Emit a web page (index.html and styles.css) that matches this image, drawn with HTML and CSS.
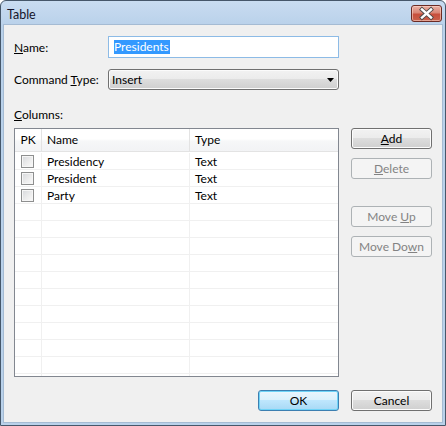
FILE: index.html
```html
<!DOCTYPE html>
<html>
<head>
<meta charset="utf-8">
<title>Table</title>
<link rel="stylesheet" href="styles.css">
</head>
<body>
<div class="window">
  <div class="titlebar">
    <span class="title">Table</span>
    <div class="close">
      <svg width="31" height="17" viewBox="0 0 31 17">
        <path d="M11 4.5 L20 12.5 M20 4.5 L11 12.5" stroke="#4a4a4a" stroke-width="4.2" stroke-linecap="square" fill="none"/>
        <path d="M11 4.5 L20 12.5 M20 4.5 L11 12.5" stroke="#ffffff" stroke-width="2.4" stroke-linecap="square" fill="none"/>
      </svg>
    </div>
  </div>
  <div class="client">
    <div class="field">
      <label class="label"><u>N</u>ame:</label>
      <div class="textbox"><span class="sel">Presidents</span></div>
    </div>
    <div class="field field-combo">
      <label class="label">Command <u>T</u>ype:</label>
      <div class="combo">
        <span class="combo-text">Insert</span>
        <svg class="combo-arrow" width="7" height="4" viewBox="0 0 7 4"><polygon points="0,0 7,0 3.5,4" fill="#000"/></svg>
      </div>
    </div>
    <div class="section-label"><u>C</u>olumns:</div>
    <div class="main">
      <div class="grid">
        <div class="row head">
          <div class="cell pk">PK</div>
          <div class="cell name">Name</div>
          <div class="cell type">Type</div>
        </div>
        <div class="rows">
          <div class="row">
            <div class="cell pk"><span class="check"></span></div>
            <div class="cell name">Presidency</div>
            <div class="cell type">Text</div>
          </div>
          <div class="row">
            <div class="cell pk"><span class="check"></span></div>
            <div class="cell name">President</div>
            <div class="cell type">Text</div>
          </div>
          <div class="row">
            <div class="cell pk"><span class="check"></span></div>
            <div class="cell name">Party</div>
            <div class="cell type">Text</div>
          </div>
          <div class="row"><div class="cell pk"></div><div class="cell name"></div><div class="cell type"></div></div>
          <div class="row"><div class="cell pk"></div><div class="cell name"></div><div class="cell type"></div></div>
          <div class="row"><div class="cell pk"></div><div class="cell name"></div><div class="cell type"></div></div>
          <div class="row"><div class="cell pk"></div><div class="cell name"></div><div class="cell type"></div></div>
          <div class="row"><div class="cell pk"></div><div class="cell name"></div><div class="cell type"></div></div>
          <div class="row"><div class="cell pk"></div><div class="cell name"></div><div class="cell type"></div></div>
          <div class="row"><div class="cell pk"></div><div class="cell name"></div><div class="cell type"></div></div>
          <div class="row"><div class="cell pk"></div><div class="cell name"></div><div class="cell type"></div></div>
          <div class="row"><div class="cell pk"></div><div class="cell name"></div><div class="cell type"></div></div>
          <div class="row"><div class="cell pk"></div><div class="cell name"></div><div class="cell type"></div></div>
          <div class="row"><div class="cell pk"></div><div class="cell name"></div><div class="cell type"></div></div>
        </div>
      </div>
      <div class="side">
        <div class="btn btn-add"><span><u>A</u>dd</span></div>
        <div class="btn disabled btn-delete"><span><u>D</u>elete</span></div>
        <div class="btn disabled btn-up"><span>Move <u>U</u>p</span></div>
        <div class="btn disabled btn-down"><span>Move Do<u>w</u>n</span></div>
      </div>
    </div>
    <div class="footer">
      <div class="btn default"><span>OK</span></div>
      <div class="btn"><span>Cancel</span></div>
    </div>
  </div>
</div>
</body>
</html>
```
FILE: styles.css
```css
html, body {
  margin: 0;
  padding: 0;
  background: #ffffff;
}
body {
  font-family: Lato, "Noto Sans", sans-serif;
  font-size: 12px;
  color: #000;
}
.window {
  box-sizing: border-box;
  width: 446px;
  height: 426px;
  border: 1px solid #46576a;
  border-radius: 6px 6px 0 0;
  background: linear-gradient(#c9dcf1 0px, #b9d1ea 25px, #b9d1ea 100%);
  padding: 0 3px 3px 3px;
  display: flex;
  flex-direction: column;
  overflow: hidden;
}
.titlebar {
  height: 24px;
  flex: none;
  display: flex;
  align-items: flex-start;
  justify-content: space-between;
}
.title {
  margin: 6px 0 0 3px;
  line-height: 15px;
  font-size: 12.5px;
  color: #14142a;
}
.close {
  margin: 4px 0 0 0;
  width: 31px;
  height: 17px;
  box-sizing: border-box;
  border: 1px solid #6b2b24;
  border-radius: 3px;
  background: linear-gradient(#eab0a4 0%, #d98676 45%, #c84f3c 55%, #c9614c 100%);
  box-shadow: inset 0 0 0 1px rgba(255, 220, 210, 0.55);
  display: flex;
}
.close svg {
  display: block;
  margin: -1px;
}
.client {
  flex: 1;
  background: #f0f0f0;
  box-shadow: 0 0 0 1px #a5bbd3;
  padding: 11px 10px 0 10px;
  display: flex;
  flex-direction: column;
}
.field {
  display: flex;
  align-items: center;
  height: 22px;
}
.field-combo {
  margin-top: 11px;
  height: 21px;
}
.label {
  width: 94px;
  flex: none;
  line-height: 15px;
}
.textbox {
  box-sizing: border-box;
  width: 231px;
  height: 22px;
  border: 1px solid #8dbbe6;
  background: #fff;
  padding: 0 0 0 5px;
  display: flex;
  align-items: center;
}
.sel {
  background: #3399ff;
  color: #fff;
  line-height: 14px;
  padding: 0 1px 0 0;
}
.combo {
  box-sizing: border-box;
  width: 231px;
  height: 21px;
  border: 1px solid #707070;
  border-radius: 3px;
  background: linear-gradient(#f2f2f2 0%, #ebebeb 50%, #dddddd 50%, #cfcfcf 100%);
  box-shadow: inset 0 0 0 1px #fbfbfb;
  padding: 0 4px 0 3px;
  display: flex;
  align-items: center;
  justify-content: space-between;
}
.combo-arrow {
  display: block;
}
.section-label {
  margin-top: 17px;
  line-height: 15px;
  margin-bottom: 6px;
}
.main {
  display: flex;
  gap: 12px;
  height: 249px;
}
.grid {
  box-sizing: border-box;
  width: 325px;
  height: 249px;
  border: 1px solid #828790;
  background: #fff;
  overflow: hidden;
}
.row {
  display: flex;
  height: 17px;
  box-sizing: border-box;
  border-bottom: 1px solid #f0f0f0;
}
.rows {
  padding-top: 1px;
}
.row.head {
  height: 23px;
  border-bottom: 1px solid #e3e3e3;
  background: linear-gradient(#ffffff 0%, #ffffff 45%, #f6f7f8 55%, #f2f3f5 100%);
}
.cell {
  box-sizing: border-box;
  line-height: 16px;
  padding: 1px 0 0 5px;
  white-space: nowrap;
}
.cell.pk {
  width: 27px;
  padding: 0;
  border-right: 1px solid #f0f0f0;
  display: flex;
  justify-content: center;
  align-items: flex-start;
}
.cell.name {
  width: 148px;
  border-right: 1px solid #f0f0f0;
}
.cell.type {
  flex: 1;
}
.head .cell {
  line-height: 22px;
  padding-top: 0;
  border-color: #e3e3e3;
}
.check {
  box-sizing: border-box;
  width: 13px;
  height: 13px;
  margin: 2px 1px 0 0;
  border: 1px solid #8e8f8f;
  background: linear-gradient(135deg, #d6d8db 0%, #eeeeee 60%, #fafafa 100%);
  box-shadow: inset 0 0 0 1px #f6f6f6;
}
.side {
  width: 81px;
  display: flex;
  flex-direction: column;
}
.btn {
  box-sizing: border-box;
  width: 81px;
  height: 21px;
  border: 1px solid #707070;
  border-radius: 3px;
  background: linear-gradient(#f2f2f2 0%, #ebebeb 50%, #dddddd 50%, #cfcfcf 100%);
  box-shadow: inset 0 0 0 1px #fcfcfc;
  display: flex;
  align-items: center;
  justify-content: center;
  line-height: 15px;
  color: #000;
}
.btn.disabled {
  border-color: #adb2b5;
  background: #f4f4f4;
  box-shadow: none;
  color: #838383;
}
.btn.btn-delete {
  margin-top: 9px;
}
.btn.btn-up {
  margin-top: 27px;
}
.btn.btn-down {
  margin-top: 9px;
}
.btn.default {
  border-color: #3c7fb1;
  background: linear-gradient(#eaf6fd 0%, #d9f0fc 50%, #bee6fd 50%, #a7d9f5 100%);
  box-shadow: inset 0 0 0 1px #6fd3f7;
}
.footer {
  margin-top: 13px;
  display: flex;
  justify-content: flex-end;
  gap: 12px;
}
```
